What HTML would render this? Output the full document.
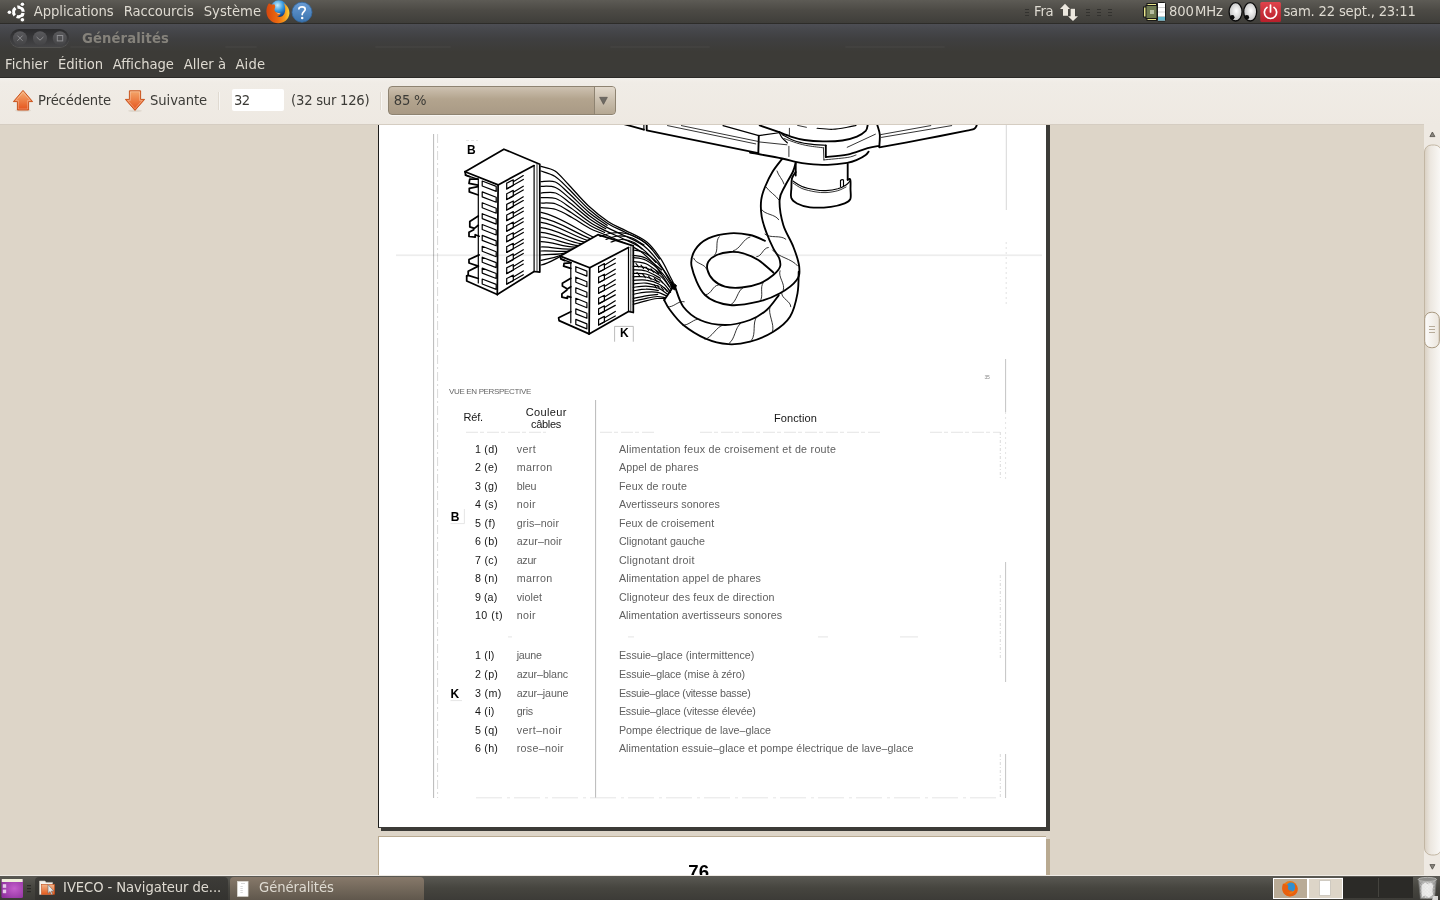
<!DOCTYPE html>
<html lang="fr">
<head>
<meta charset="utf-8">
<title>Généralités</title>
<style>
*{box-sizing:border-box;margin:0;padding:0}
html,body{width:1440px;height:900px;overflow:hidden;background:#efebe5}
body{position:relative;font-family:"DejaVu Sans","Liberation Sans",sans-serif;font-size:13px;color:#3c3b37}
.abs{position:absolute}
svg{position:absolute;overflow:visible}
.t{position:absolute;white-space:nowrap;line-height:1}
#toppanel{left:0;top:0;width:1440px;height:24px;background:linear-gradient(#5d5b55 0,#4c4a45 45%,#3f3e3a 100%);border-bottom:1px solid #2d2c29}
#toppanel .t{color:#dfdbd2;font-size:13.2px;top:5px}
#titlebar{left:0;top:24px;width:1440px;height:28px;background:linear-gradient(#4d4e54 0,#45464a 25%,#3f3f40 55%,#3c3b37 100%)}
#titlebar .t{color:#85827b;font-weight:bold;font-size:13.2px;top:8px;left:82px}
#menubar{left:0;top:52px;width:1440px;height:26px;background:#3c3b37;border-bottom:1px solid #2b2a27}
#menubar .t{color:#dfdbd2;font-size:13.2px;top:6px}
#toolbar{left:0;top:78px;width:1440px;height:47px;background:linear-gradient(#f3f0eb 0,#f0ece6 10%,#eee9e2 100%)}
#toolbar .t{color:#3c3b37;font-size:13.2px;top:16px}
#content{left:0;top:125px;width:1424px;height:750px;background:#ddd5c8;overflow:hidden}
#scroll{left:1424px;top:125px;width:16px;height:750px;background:#eee9e2}
#bottompanel{left:0;top:876px;width:1440px;height:24px;background:linear-gradient(#5a5953 0,#46453f 50%,#3c3b37 100%)}
#bottompanel .t{color:#dfdbd2;font-size:13.2px;top:5px}
#page{left:378px;top:-10px;width:668px;height:713px;background:#fff;border-left:1px solid #1c1c1a;border-bottom:1px solid #3c3b37}
#page2{left:378px;top:711px;width:668px;height:60px;background:#fff;border-left:1px solid #b9aa91;border-top:1px solid #b9aa91}
.doc{font-family:"Liberation Sans",sans-serif}
.d{position:absolute;white-space:nowrap;line-height:1;font-family:"Liberation Sans",sans-serif}

</style>
</head>
<body>
<div id="toppanel" class="abs">
  <svg style="left:0;top:0" width="36" height="24" viewBox="0 0 36 24">
    <g fill="none" stroke="#fff" stroke-width="3.2">
      <circle cx="18.3" cy="12" r="4.9" stroke-dasharray="8.26 2.0" stroke-dashoffset="-1.0"/>
    </g>
    <g fill="#4c4a45"><circle cx="9.4" cy="12.2" r="2.9"/><circle cx="22.6" cy="4.3" r="2.9"/><circle cx="22.6" cy="19.7" r="2.9"/></g>
    <g fill="#fff"><circle cx="9.4" cy="12.2" r="1.8"/><circle cx="22.4" cy="4.3" r="1.8"/><circle cx="22.4" cy="19.7" r="1.8"/></g>
  </svg>
  <span class="t" style="left:33.7px;letter-spacing:-0.05px">Applications</span>
  <span class="t" style="left:123.7px;letter-spacing:-0.08px">Raccourcis</span>
  <span class="t" style="left:203.7px;letter-spacing:0.01px">Système</span>
  <!-- firefox -->
  <svg style="left:266px;top:0" width="24" height="24" viewBox="0 0 24 24">
    <defs>
      <radialGradient id="ffg" cx="0.42" cy="0.3" r="0.75"><stop offset="0" stop-color="#c9eefa"/><stop offset="0.45" stop-color="#3a9be0"/><stop offset="0.85" stop-color="#0f4a98"/><stop offset="1" stop-color="#0a2d66"/></radialGradient>
      <linearGradient id="ffo" x1="0" y1="0" x2="1" y2="0"><stop offset="0" stop-color="#d4460f"/><stop offset="0.5" stop-color="#ec6a10"/><stop offset="0.8" stop-color="#f59a1c"/><stop offset="1" stop-color="#fdd43c"/></linearGradient>
    </defs>
    <circle cx="12.9" cy="8.6" r="8.4" fill="url(#ffg)"/>
    <path d="M3 3.2 C4.4 4.6 6 4.8 8.2 4.2 C9.4 5.4 9.6 6.8 8.8 8.2 C8 9.8 8.6 11.6 10.6 12.4 C12 13 13.4 13 14.6 13.4 C14 15.2 12.4 16.2 10.6 15.8 C12.6 17.8 16.6 17.4 18.4 13.4 C19.8 10.2 19.4 6.4 17.6 3 C21.2 5.2 23.8 9.4 23.4 13.8 C22.8 19.6 17.8 23.3 12.3 23.3 C6 23.3 0.7 18.6 0.4 11.8 C0.3 8.2 1.3 5.2 3 3.2 Z" fill="url(#ffo)"/>
    <path d="M9.6 12 C11 13.2 13 13 14.6 13.4 C13.4 14 11.2 14 9.6 12 Z" fill="#f4e3d2"/>
  </svg>
  <!-- help -->
  <svg style="left:291px;top:1px" width="22" height="22" viewBox="0 0 22 22">
    <defs><linearGradient id="hg" x1="0" y1="0" x2="0" y2="1"><stop offset="0" stop-color="#6a9cd4"/><stop offset="1" stop-color="#3a73ad"/></linearGradient></defs>
    <circle cx="11" cy="11.2" r="10" fill="url(#hg)" stroke="#3369a3" stroke-width="0.8"/>
    <path d="M7.9 7.9 C8.1 5.2 14.2 5 14.2 8.2 C14.2 10.4 11.2 10.8 11.2 13.6" fill="none" stroke="#fff" stroke-width="1.7" stroke-linecap="round"/>
    <circle cx="11.2" cy="17" r="1.25" fill="#fff"/>
  </svg>
  <!-- handles -->
  <svg style="left:1025px;top:0" width="90" height="24" viewBox="0 0 90 24">
    <g fill="#33322f">
      <rect x="0" y="9" width="4" height="1"/><rect x="0" y="12" width="4" height="1"/><rect x="0" y="15" width="4" height="1"/>
      <rect x="61" y="9" width="4" height="1"/><rect x="61" y="12" width="4" height="1"/><rect x="61" y="15" width="4" height="1"/>
      <rect x="72" y="9" width="4" height="1"/><rect x="72" y="12" width="4" height="1"/><rect x="72" y="15" width="4" height="1"/>
      <rect x="83" y="9" width="4" height="1"/><rect x="83" y="12" width="4" height="1"/><rect x="83" y="15" width="4" height="1"/>
    </g>
    <g fill="#ece8df">
      <path d="M40 3.7 L45 9 L43 9 L43 15.8 L38 15.8 L38 9 L35 9 Z"/>
      <path d="M45.6 8.8 L50 8.8 L50 16.2 L53 16.2 L48 21 L43 16.2 L45.6 16.2 Z" stroke="#3f3e3a" stroke-width="0.9" paint-order="stroke"/>
    </g>
  </svg>
  <span class="t" style="left:1034.0px;letter-spacing:-0.25px">Fra</span>
  <!-- cpu freq -->
  <svg style="left:1143px;top:0" width="24" height="24" viewBox="0 0 24 24">
    <rect x="0.5" y="7" width="3" height="10" fill="#e8e48a" stroke="#1a1a18" stroke-width="1"/>
    <rect x="4" y="3.5" width="9.5" height="3" fill="#e8e48a" stroke="#1a1a18" stroke-width="1"/>
    <rect x="4" y="17.5" width="9.5" height="3" fill="#e8e48a" stroke="#1a1a18" stroke-width="1"/>
    <rect x="3" y="5.5" width="11" height="13" fill="#6f7a52" stroke="#1a1a18" stroke-width="1"/>
    <rect x="7" y="10" width="4" height="4" fill="#b5bda0"/>
    <rect x="14.5" y="2.5" width="8" height="18.5" rx="0.8" fill="#fff" stroke="#1a1a18" stroke-width="1"/>
    <rect x="15" y="16.5" width="7" height="4" fill="#63b6cb"/>
    <g fill="#c9c9c9"><rect x="15" y="7" width="7" height="0.8"/><rect x="15" y="11.6" width="7" height="0.8"/><rect x="15" y="16" width="7" height="0.8"/></g>
  </svg>
  <span class="t" style="left:1169.1px;letter-spacing:-0.2px;word-spacing:-2.6px">800 MHz</span>
  <!-- eyes -->
  <svg style="left:1228px;top:0" width="30" height="24" viewBox="0 0 30 24">
    <defs><radialGradient id="eg" cx="0.55" cy="0.45" r="0.6"><stop offset="0" stop-color="#fff"/><stop offset="1" stop-color="#b9b9b9"/></radialGradient></defs>
    <ellipse cx="7.6" cy="11.8" rx="6.5" ry="9.2" fill="url(#eg)" stroke="#0c0c0c" stroke-width="1.3"/>
    <ellipse cx="22.2" cy="11.8" rx="6.5" ry="9.2" fill="url(#eg)" stroke="#0c0c0c" stroke-width="1.3"/>
    <circle cx="4.2" cy="17.2" r="2.3" fill="#0c0c0c"/><circle cx="18.8" cy="17.2" r="2.3" fill="#0c0c0c"/>
  </svg>
  <!-- power -->
  <svg style="left:1260px;top:2px" width="21" height="20" viewBox="0 0 21 20">
    <defs><linearGradient id="pg" x1="0" y1="0" x2="0" y2="1"><stop offset="0" stop-color="#e0444c"/><stop offset="1" stop-color="#b81f2b"/></linearGradient></defs>
    <rect x="0.3" y="0" width="20.6" height="20" rx="1.5" fill="url(#pg)"/>
    <path d="M7 5.4 A6.1 6.1 0 1 0 14 5.4" fill="none" stroke="#fff" stroke-width="1.7" stroke-linecap="round"/>
    <path d="M10.5 3 L10.5 10" stroke="#fff" stroke-width="1.7" stroke-linecap="round"/>
  </svg>
  <span class="t" style="left:1283.4px;letter-spacing:-0.2px">sam. 22 sept., 23:11</span>
</div>
<div id="titlebar" class="abs">
  <div class="abs tstrip" style="left:70px;top:22px;width:30px;height:2px;background:rgba(255,255,255,0.028);border-radius:1px"></div><div class="abs tstrip" style="left:225px;top:22px;width:32px;height:2px;background:rgba(255,255,255,0.028);border-radius:1px"></div><div class="abs tstrip" style="left:375px;top:22px;width:76px;height:2px;background:rgba(255,255,255,0.028);border-radius:1px"></div><div class="abs tstrip" style="left:610px;top:22px;width:100px;height:2px;background:rgba(255,255,255,0.028);border-radius:1px"></div><div class="abs tstrip" style="left:845px;top:22px;width:100px;height:2px;background:rgba(255,255,255,0.028);border-radius:1px"></div>
  <div class="abs" style="left:10px;top:5px;width:59px;height:18px;border-radius:9px;background:linear-gradient(#2b2b2d,#454547);box-shadow:0 1px 0 rgba(255,255,255,0.12)"></div>
  <svg style="left:10px;top:5px" width="59" height="18" viewBox="0 0 59 18">
    <defs><linearGradient id="wb" x1="0" y1="0" x2="0" y2="1"><stop offset="0" stop-color="#5a5a5d"/><stop offset="1" stop-color="#444446"/></linearGradient></defs>
    <circle cx="10" cy="9.2" r="7" fill="url(#wb)"/><circle cx="30" cy="9.2" r="7" fill="url(#wb)"/><circle cx="49.8" cy="9.2" r="7" fill="url(#wb)"/>
    <g stroke="#8d8d90" stroke-width="1" fill="none">
      <path d="M7.4 6.6 L12.6 11.8 M12.6 6.6 L7.4 11.8"/>
      <path d="M26.6 8 L30 11.2 L33.4 8"/>
      <rect x="47.3" y="6.5" width="5.4" height="5.4"/>
    </g>
  </svg>
  <span class="t" style="letter-spacing:0.12px">Généralités</span>
</div>
<div id="menubar" class="abs">
  <span class="t" style="left:5.1px;letter-spacing:-0.02px">Fichier</span>
  <span class="t" style="left:58.1px;letter-spacing:-0.09px">Édition</span>
  <span class="t" style="left:112.7px;letter-spacing:-0.06px">Affichage</span>
  <span class="t" style="left:183.7px;letter-spacing:0.03px">Aller à</span>
  <span class="t" style="left:235.4px;letter-spacing:0.21px">Aide</span>
</div>
<div id="toolbar" class="abs">
  <div id="tbline" class="abs" style="left:0;top:46px;width:1424px;height:1px;background:#d5cdc2"></div>
  <svg style="left:12px;top:11px" width="24" height="24" viewBox="0 0 24 24">
    <defs><linearGradient id="ag" x1="0" y1="0" x2="0" y2="1"><stop offset="0" stop-color="#f6b176"/><stop offset="1" stop-color="#e5521a"/></linearGradient></defs>
    <ellipse cx="11" cy="21.6" rx="8" ry="1.4" fill="#d8d0c4" opacity="0.7"/>
    <path d="M11 1.4 L20.6 12.6 L16.6 12.6 L16.6 21 L5.4 21 L5.4 12.6 L1.4 12.6 Z" fill="url(#ag)" stroke="#c9531c" stroke-width="1" stroke-linejoin="round"/><path d="M11 3.2 L18.2 11.6 L15.6 11.6 L15.6 20 L6.4 20 L6.4 11.6 L3.8 11.6 Z" fill="none" stroke="#fff" stroke-opacity="0.3" stroke-width="0.9"/>
  </svg>
  <svg style="left:124px;top:11px" width="24" height="24" viewBox="0 0 24 24">
    <defs><linearGradient id="ag2" x1="0" y1="0" x2="0" y2="1"><stop offset="0" stop-color="#f4a76c"/><stop offset="1" stop-color="#e5521a"/></linearGradient></defs>
    <ellipse cx="11" cy="21.8" rx="7" ry="1.3" fill="#d8d0c4" opacity="0.7"/>
    <path d="M5.4 1.8 L16.6 1.8 L16.6 10.4 L20.6 10.4 L11 21.4 L1.4 10.4 L5.4 10.4 Z" fill="url(#ag2)" stroke="#c9531c" stroke-width="1" stroke-linejoin="round"/><path d="M6.4 2.8 L15.6 2.8 L15.6 11.4 L18.2 11.4 L11 19.8 L3.8 11.4 L6.4 11.4 Z" fill="none" stroke="#fff" stroke-opacity="0.3" stroke-width="0.9"/>
  </svg>
  <span class="t" style="left:38.1px;letter-spacing:-0.15px">Précédente</span>
  <span class="t" style="left:150.1px;letter-spacing:-0.12px">Suivante</span>
  <div class="abs" style="left:218px;top:14px;width:1px;height:18px;background:#e0dad1"></div>
  <div class="abs" style="left:219px;top:14px;width:1px;height:18px;background:#f8f6f3"></div>
  <div class="abs" style="left:232px;top:11px;width:52px;height:22px;background:#fff;border-radius:2px"></div>
  <span class="t" style="left:233.9px;letter-spacing:-0.49px">32</span>
  <span class="t" style="left:291.1px;letter-spacing:-0.25px">(32 sur 126)</span>
  <div class="abs" style="left:380px;top:14px;width:1px;height:18px;background:#e0dad1"></div>
  <div class="abs" style="left:381px;top:14px;width:1px;height:18px;background:#f8f6f3"></div>
  <div class="abs" style="left:388px;top:8px;width:228px;height:29px;border:1px solid #8e8371;border-radius:4px;background:linear-gradient(#cdc1b0 0,#b3a48e 45%,#a99a85 100%);box-shadow:0 1px 0 #f8f6f3"></div>
  <div class="abs" style="left:594px;top:9px;width:21px;height:27px;border-left:1px solid #8e8371;border-radius:0 3px 3px 0;background:linear-gradient(#e2d9cc 0,#c9bead 50%,#b5a893 100%)"></div>
  <svg style="left:599px;top:19px" width="9" height="8" viewBox="0 0 9 8"><path d="M0.6 0.3 L8.4 0.3 L4.5 7.4 Z" fill="#6e6a63" stroke="#55514b" stroke-width="0.6"/></svg>
  <span class="t" style="left:393.7px;letter-spacing:-0.2px">85 %</span>
</div>

<div id="content" class="abs">
  <div id="page" class="abs"></div>
  <div class="abs" style="left:381px;top:703px;width:669px;height:3px;background:#3c3b37"></div>
  <div class="abs" style="left:1046px;top:0;width:4px;height:706px;background:#3c3b37"></div>
  <div id="page2" class="abs"></div>
  <div class="abs" style="left:1046px;top:714px;width:4px;height:40px;background:#b9aa91"></div>
<svg style="left:0;top:0" width="1424" height="750" viewBox="0 125 1424 750" fill="none">
<g stroke="#b0b0b0" stroke-width="0.9">
<path d="M433.6,134 V798"/>
<path d="M595.6,400 V798"/>
</g>
<g stroke="#dedede" stroke-width="0.8">
<path d="M437.6,134 V798" stroke-dasharray="9 3 2 3" stroke="#cfcfcf"/>
<path d="M1000.3,432 V480 M1000.3,575 V660 M1000.3,754 V798" stroke-dasharray="3 2 1 2" stroke="#cfcfcf"/>
<path d="M1006.3,125 V210" stroke="#cdcdcd"/><path d="M1006.2,242 V305 M1005.6,412 V480" stroke="#dcdcdc" stroke-dasharray="2 3"/><path d="M1005.6,359 V412 M1005.6,562 V682 M1005.6,754 V798" stroke="#b4b4b4"/>
<path d="M466,432.3 H546 M600,432.3 H656 M700,432.3 H880 M930,432.3 H1000" stroke-dasharray="12 2 4 3"/>
<path d="M476,797.8 H1000" stroke-dasharray="26 5 3 4"/>
<path d="M508,636.9 H512 M628,636.9 H634 M818,636.9 H828 M900,636.9 H918" />
<path d="M450.5,523.6 H464.4 V509" /><path d="M450.5,700.6 H462" />
<path d="M614.6,326.4 H633.3 V341.7 M614.6,326.4 V341.7" stroke="#aaa"/>
<path d="M466,140.5 H478" stroke-dasharray="3 2"/>
</g></svg>
<svg style="left:0;top:0" width="1424" height="750" viewBox="0 125 1424 750" fill="none" stroke-linecap="round" stroke-linejoin="round">
<g stroke="#000" stroke-width="1.25"><path d="M541.0,166.3 C543.3,167.1 550.5,168.0 555.0,171.0 C559.5,174.0 562.8,178.5 568.3,184.3 C573.8,190.1 581.6,199.5 588.3,205.7 C595.0,211.9 602.1,217.5 608.3,221.7 C614.5,225.8 619.3,227.2 625.7,230.6 C632.1,233.9 640.7,237.2 646.5,241.8 C652.3,246.4 656.4,252.5 660.3,258.2 C664.2,263.8 667.6,271.6 669.7,275.7 C671.9,279.8 672.6,281.5 673.2,282.7"/><path d="M541.0,171.0 C543.4,171.9 550.5,173.5 555.1,176.5 C559.8,179.5 563.3,183.6 568.8,189.0 C574.4,194.5 582.1,203.2 588.5,209.0 C595.0,214.7 601.6,219.6 607.7,223.5 C613.8,227.4 618.9,229.0 625.2,232.2 C631.5,235.5 639.9,238.6 645.6,243.1 C651.3,247.6 657.1,256.4 659.4,259.0"/><path d="M541.0,181.7 C543.4,181.8 550.6,180.0 555.3,182.0 C560.0,184.0 563.8,188.8 569.4,193.8 C574.9,198.8 582.5,207.0 588.8,212.2 C595.1,217.5 604.0,223.1 607.1,225.3"/><path d="M541.0,186.3 C543.4,186.5 550.6,185.5 555.4,187.5 C560.2,189.5 564.3,193.9 569.9,198.5 C575.5,203.2 582.9,210.7 589.0,215.5 C595.1,220.2 600.6,223.7 606.5,227.1 C612.3,230.4 617.9,232.4 624.1,235.5 C630.3,238.6 638.1,241.5 643.7,245.7 C649.3,249.9 653.7,255.5 657.6,260.7 C661.5,265.8 665.0,272.8 667.3,276.7 C669.6,280.6 670.7,282.9 671.4,284.1"/><path d="M541.0,193.0 C543.4,193.0 550.7,191.3 555.6,193.0 C560.5,194.7 564.8,199.0 570.4,203.3 C576.0,207.6 583.4,214.5 589.3,218.7 C595.2,223.0 603.1,227.2 605.8,228.8"/><path d="M541.0,197.7 C543.5,197.8 550.7,196.8 555.7,198.5 C560.7,200.2 565.3,204.1 570.9,208.0 C576.6,211.9 583.8,218.2 589.5,222.0 C595.2,225.8 599.6,227.8 605.2,230.6 C610.8,233.4 617.0,235.8 623.1,238.7 C629.2,241.7 636.4,244.4 641.9,248.4 C647.3,252.3 653.5,260.0 655.8,262.3"/><path d="M541.0,203.0 C543.5,203.2 550.8,202.4 555.9,204.0 C560.9,205.6 565.8,209.2 571.5,212.8 C577.1,216.3 584.2,222.0 589.8,225.2 C595.3,228.5 602.1,231.2 604.6,232.4"/><path d="M541.0,207.7 C543.5,208.0 550.8,207.9 556.0,209.5 C561.2,211.1 566.3,214.3 572.0,217.5 C577.7,220.7 584.7,225.7 590.0,228.5 C595.3,231.3 598.7,231.9 604.0,234.2 C609.3,236.4 616.0,239.2 622.0,242.0 C628.0,244.8 634.7,247.3 640.0,251.0 C645.3,254.7 650.0,259.5 654.0,264.0 C658.0,268.5 661.5,274.3 664.0,278.0 C666.5,281.7 668.2,284.7 669.0,286.0"/><path d="M541,212.3 C558.5,215.6 576.0,228.8 593.5,237.2"/><path d="M541,217.7 C557.5,220.3 574.1,232.4 590.6,238.9"/><path d="M541,222.3 C556.6,224.2 572.2,235.8 587.8,240.5"/><path d="M541,227.7 C555.6,229.0 570.3,239.1 584.9,242.2"/><path d="M541,232.3 C554.7,233.1 568.4,242.2 582.0,243.9"/><path d="M541,237.0 C553.7,237.3 566.5,245.1 579.2,245.6"/><path d="M541,241.7 C552.8,241.6 564.5,247.9 576.3,247.2"/><path d="M541,247.0 C551.8,246.5 562.6,250.5 573.5,248.9"/><path d="M541,251.0 C550.9,250.2 560.7,252.9 570.6,250.6"/><path d="M541,255.0 C549.9,254.0 558.8,255.1 567.7,252.3"/><path d="M541,260.3 C549.0,259.1 556.9,257.2 564.9,253.9"/><path d="M541,265.0 C548.0,263.7 555.0,259.1 562.0,255.6"/></g>
<polygon points="465.1,171.7 503.9,149.2 539.8,164.3 539.8,272.1 534.1,271.5 497.3,294.5 466.7,281.0 466.7,275.9 478.3,268.9 478.3,179.4 465.6,175.1" fill="#fff" stroke="none"/>
<g stroke="#000" stroke-width="1.2"><path d="M534.1,165.6 L534.1,271.1"/><path d="M465.6,175.1 L478.3,179.4"/><path d="M478.3,179.0 L478.3,282.9"/><path d="M482.2,181.0 L496.2,186.4 L496.2,191.4 L482.2,186.0 L482.2,181.0"/><path d="M482.2,191.9 L496.2,197.3 L496.2,202.3 L482.2,196.9 L482.2,191.9"/><path d="M482.2,202.8 L496.2,208.2 L496.2,213.2 L482.2,207.7 L482.2,202.8"/><path d="M482.2,213.7 L496.2,219.1 L496.2,224.1 L482.2,218.6 L482.2,213.7"/><path d="M482.2,224.5 L496.2,230.0 L496.2,235.0 L482.2,229.5 L482.2,224.5"/><path d="M482.2,235.4 L496.2,240.9 L496.2,245.8 L482.2,240.4 L482.2,235.4"/><path d="M482.2,246.3 L496.2,251.8 L496.2,256.7 L482.2,251.3 L482.2,246.3"/><path d="M482.2,257.2 L496.2,262.6 L496.2,267.6 L482.2,262.2 L482.2,257.2"/><path d="M482.2,268.1 L496.2,273.5 L496.2,278.5 L482.2,273.1 L482.2,268.1"/><path d="M482.2,279.0 L496.2,284.4 L496.2,289.4 L482.2,284.0 L482.2,279.0"/><path d="M506.7,183.2 L513.3,179.8 L513.3,185.5 L506.7,188.9 L506.7,183.2"/><path d="M513.3,181.7 L523.3,175.6"/><path d="M506.7,188.9 L523.3,179.4"/><path d="M506.7,193.8 L513.3,190.4 L513.3,196.1 L506.7,199.5 L506.7,193.8"/><path d="M513.3,192.3 L523.3,186.2"/><path d="M506.7,199.5 L523.3,190.0"/><path d="M506.7,204.4 L513.3,201.0 L513.3,206.6 L506.7,210.0 L506.7,204.4"/><path d="M513.3,202.9 L523.3,196.8"/><path d="M506.7,210.0 L523.3,200.6"/><path d="M506.7,215.0 L513.3,211.6 L513.3,217.2 L506.7,220.6 L506.7,215.0"/><path d="M513.3,213.4 L523.3,207.4"/><path d="M506.7,220.6 L523.3,211.2"/><path d="M506.7,225.5 L513.3,222.1 L513.3,227.8 L506.7,231.2 L506.7,225.5"/><path d="M513.3,224.0 L523.3,218.0"/><path d="M506.7,231.2 L523.3,221.8"/><path d="M506.7,236.1 L513.3,232.7 L513.3,238.4 L506.7,241.8 L506.7,236.1"/><path d="M513.3,234.6 L523.3,228.6"/><path d="M506.7,241.8 L523.3,232.4"/><path d="M506.7,246.7 L513.3,243.3 L513.3,249.0 L506.7,252.4 L506.7,246.7"/><path d="M513.3,245.2 L523.3,239.2"/><path d="M506.7,252.4 L523.3,242.9"/><path d="M506.7,257.3 L513.3,253.9 L513.3,259.6 L506.7,263.0 L506.7,257.3"/><path d="M513.3,255.8 L523.3,249.7"/><path d="M506.7,263.0 L523.3,253.5"/><path d="M506.7,267.9 L513.3,264.5 L513.3,270.2 L506.7,273.6 L506.7,267.9"/><path d="M513.3,266.4 L523.3,260.3"/><path d="M506.7,273.6 L523.3,264.1"/><path d="M506.7,278.5 L513.3,275.1 L513.3,280.7 L506.7,284.1 L506.7,278.5"/><path d="M513.3,277.0 L523.3,270.9"/><path d="M506.7,284.1 L523.3,274.7"/></g>
<g stroke="#000" stroke-width="1.75"><path d="M465.1,171.7 L503.9,149.2 L539.8,164.3 L539.8,272.1 L534.1,271.5 L497.3,294.5"/><path d="M465.1,171.7 L498.1,184.9 L534.1,165.6"/><path d="M498.1,184.9 L497.3,294.5"/><path d="M465.1,171.7 L465.6,175.1"/><path d="M465.6,175.1 L469.8,176.8"/><path d="M478.0,179.0 L469.8,179.0 L469.0,183.3 L478.0,185.2"/><path d="M478.0,186.7 L469.3,188.3 L469.3,191.9 L478.3,195.0"/><path d="M478.3,216.0 L469.8,221.4 L469.8,226.9 L474.4,228.4 L478.3,225.3"/><path d="M473.7,229.7 L469.0,232.3 L469.0,236.5 L475.2,237.1 L475.2,234.7 L479.1,236.2"/><path d="M479.1,254.9 L469.0,259.5 L469.0,263.0 L478.3,266.1"/><path d="M478.3,266.1 L468.2,271.2 L468.2,275.4 L478.3,278.5"/><path d="M466.7,275.9 L466.7,281.0 L497.3,294.5"/><path d="M468.2,275.4 L466.7,275.9"/></g>
<polygon points="560.2,256.1 597.9,234.7 633.3,245.8 633.3,312.5 628.5,311.4 589.1,333.9 559.1,320.6 558.6,317.8 570.8,311.7 570.8,262.8 560.8,258.9" fill="#fff" stroke="none"/>
<g stroke="#000" stroke-width="1.2"><path d="M628.5,247.5 L628.5,311.4"/><path d="M560.8,258.9 L571.3,262.6"/><path d="M570.8,262.6 L570.8,322.8"/><path d="M575.8,266.7 L586.9,271.1 L586.9,276.1 L575.8,271.7 L575.8,266.7"/><path d="M575.8,277.2 L586.9,281.7 L586.9,286.7 L575.8,282.2 L575.8,277.2"/><path d="M575.8,287.8 L586.9,292.2 L586.9,297.2 L575.8,292.8 L575.8,287.8"/><path d="M575.8,298.3 L586.9,302.8 L586.9,307.8 L575.8,303.3 L575.8,298.3"/><path d="M575.8,308.9 L586.9,313.3 L586.9,318.3 L575.8,313.9 L575.8,308.9"/><path d="M575.8,319.4 L586.9,323.9 L586.9,328.9 L575.8,324.4 L575.8,319.4"/><path d="M598.6,266.7 L604.4,263.6 L604.4,269.2 L598.6,272.2 L598.6,266.7"/><path d="M604.4,265.3 L615.3,258.6"/><path d="M598.6,272.2 L615.3,263.2"/><path d="M598.6,277.2 L604.4,274.2 L604.4,279.7 L598.6,282.8 L598.6,277.2"/><path d="M604.4,275.8 L615.3,269.2"/><path d="M598.6,282.8 L615.3,273.8"/><path d="M598.6,287.8 L604.4,284.7 L604.4,290.3 L598.6,293.3 L598.6,287.8"/><path d="M604.4,286.4 L615.3,279.7"/><path d="M598.6,293.3 L615.3,284.3"/><path d="M598.6,298.3 L604.4,295.3 L604.4,300.8 L598.6,303.9 L598.6,298.3"/><path d="M604.4,296.9 L615.3,290.3"/><path d="M598.6,303.9 L615.3,294.9"/><path d="M598.6,308.9 L604.4,305.8 L604.4,311.4 L598.6,314.4 L598.6,308.9"/><path d="M604.4,307.5 L615.3,300.8"/><path d="M598.6,314.4 L615.3,305.4"/><path d="M598.6,319.4 L604.4,316.4 L604.4,321.9 L598.6,325.0 L598.6,319.4"/><path d="M604.4,318.1 L615.3,311.4"/><path d="M598.6,325.0 L615.3,316.0"/></g>
<g stroke="#000" stroke-width="1.75"><path d="M560.2,256.1 L597.9,234.7 L633.3,245.8 L633.3,312.5 L628.5,311.4 L589.1,333.9"/><path d="M560.2,256.1 L589.7,267.8 L628.5,247.5"/><path d="M589.7,267.8 L589.1,333.9"/><path d="M560.2,256.1 L560.8,258.9 L564.7,260.6"/><path d="M570.8,262.8 L564.1,263.3 L563.6,266.1 L570.8,268.3"/><path d="M570.8,278.3 L562.4,283.3 L562.4,286.1 L567.4,288.9 L570.8,286.7"/><path d="M566.9,290.0 L561.9,293.9 L561.9,297.2 L567.4,298.3 L567.4,296.3 L570.8,297.2"/><path d="M570.8,311.7 L558.6,317.8 L559.1,320.6 L589.1,333.9"/></g>
<g stroke="#000" stroke-width="1.2"><path d="M633.3,250.0 C635.4,250.6 641.2,250.5 646.0,253.5 C650.8,256.5 657.4,262.7 662.0,268.0 C666.6,273.3 671.6,282.6 673.5,285.5"/><path d="M633.3,255.3 C635.4,255.8 641.3,255.9 646.0,258.3 C650.7,260.8 659.1,268.1 661.7,270.0"/><path d="M633.3,257.6 C635.4,258.0 641.3,257.8 646.0,260.2 C650.7,262.6 657.0,267.6 661.3,272.1 C665.7,276.6 670.5,284.7 672.3,287.2"/><path d="M633.3,261.7 C635.4,262.1 641.4,261.7 646.0,263.8 C650.6,265.9 658.5,272.4 661.0,274.1"/><path d="M633.3,266.3 C635.4,266.6 641.4,266.3 646.0,267.9 C650.6,269.6 656.5,272.6 660.7,276.1 C664.8,279.6 669.4,286.8 671.1,289.0"/><path d="M633.3,269.8 C635.4,270.0 641.5,269.6 646.0,271.0 C650.5,272.4 657.9,277.0 660.3,278.2"/><path d="M633.3,273.3 C635.4,273.4 641.5,272.9 646.0,274.0 C650.5,275.1 656.0,277.4 660.0,280.2 C664.0,283.0 668.2,288.9 669.9,290.7"/><path d="M633.3,276.8 C635.4,276.8 641.6,276.1 646.0,277.0 C650.4,277.9 657.4,281.4 659.7,282.2"/><path d="M633.3,280.3 C635.4,280.3 641.7,279.4 646.0,280.1 C650.3,280.7 655.6,282.2 659.3,284.3 C663.1,286.3 667.1,291.1 668.7,292.4"/><path d="M633.3,283.8 C635.4,283.7 641.7,282.7 646.0,283.1 C650.3,283.5 656.8,285.8 659.0,286.3"/><path d="M633.3,287.3 C635.4,287.1 641.8,286.0 646.0,286.1 C650.2,286.3 655.1,287.0 658.7,288.3 C662.2,289.7 666.0,293.2 667.5,294.2"/><path d="M633.3,290.8 C635.4,290.5 641.8,289.2 646.0,289.2 C650.2,289.1 656.3,290.2 658.3,290.4"/><path d="M633.3,294.3 C635.4,293.9 641.9,292.5 646.0,292.2 C650.1,291.9 654.6,291.8 658.0,292.4 C661.4,293.0 664.9,295.3 666.3,295.9"/><path d="M633.3,298.4 C635.4,298.0 641.9,296.5 646.0,295.8 C650.1,295.2 655.7,294.7 657.7,294.4"/><path d="M633.3,301.3 C635.4,300.8 642.0,299.1 646.0,298.3 C650.0,297.5 654.2,296.6 657.3,296.5 C660.5,296.4 663.8,297.4 665.1,297.6"/><path d="M633.3,304.3 C635.4,303.7 642.0,301.8 646.0,300.8 C650.0,299.8 653.9,298.9 657.0,298.5 C660.1,298.1 663.2,298.5 664.5,298.5"/><path d="M600.0,236.5 C602.0,235.9 607.7,233.5 612.0,233.0 C616.3,232.5 621.3,232.5 626.0,233.5 C630.7,234.5 635.7,236.4 640.0,239.0 C644.3,241.6 650.0,247.3 652.0,249.0"/><path d="M606.0,239.5 C608.0,238.9 613.7,236.2 618.0,236.0 C622.3,235.8 627.7,236.5 632.0,238.0 C636.3,239.5 642.0,243.8 644.0,245.0"/><path d="M611.0,242.0 C612.8,241.6 618.2,239.4 622.0,239.5 C625.8,239.6 630.7,240.9 634.0,242.5 C637.3,244.1 640.7,247.9 642.0,249.0"/></g>
<g stroke="#000" stroke-width="1.1"><path d="M636.0,263.5 l2.6,3.4"/><path d="M641.0,265.2 l2.6,3.4"/><path d="M646.0,267.0 l2.6,3.4"/><path d="M651.0,268.8 l2.6,3.4"/><path d="M656.0,270.5 l2.6,3.4"/><path d="M637.0,272.5 l2.6,3.4"/><path d="M642.8,274.2 l2.6,3.4"/><path d="M648.5,276.0 l2.6,3.4"/><path d="M654.2,277.8 l2.6,3.4"/><path d="M660.0,279.5 l2.6,3.4"/><path d="M654.0,284.5 l2.6,3.4"/><path d="M657.5,285.6 l2.6,3.4"/><path d="M661.0,286.8 l2.6,3.4"/><path d="M664.5,287.9 l2.6,3.4"/><path d="M668.0,289.0 l2.6,3.4"/></g>
<g stroke="#000" stroke-width="1.85"><path d="M620.0,123.0 L643.9,129.7"/><path d="M646.7,125.0 L646.7,130.4 L758.3,153.1"/><path d="M750.0,152.6 C755.4,153.6 774.5,156.9 782.1,158.5 C789.7,160.1 791.3,161.0 795.7,161.9 C800.1,162.8 802.9,163.3 808.3,163.8 C813.6,164.3 821.3,165.0 827.8,164.8 C834.3,164.6 842.4,163.6 847.2,162.8 C852.1,162.0 853.8,161.2 856.9,159.9 C860.0,158.6 863.8,156.4 865.7,155.0 C867.7,153.6 868.1,152.2 868.6,151.7"/><path d="M759.7,125.4 L779.2,132.2"/><path d="M779.2,132.2 C781.1,132.9 786.6,135.3 790.8,136.6 C795.0,137.9 799.0,139.2 804.4,140.0 C809.8,140.8 816.6,141.3 822.9,141.4 C829.2,141.5 836.7,141.3 842.4,140.5 C848.1,139.7 853.0,138.2 856.9,136.6 C860.8,135.0 863.9,132.6 865.7,130.8 C867.5,128.9 867.3,126.3 867.6,125.4"/><path d="M825.8,145.3 L825.8,157.0"/><path d="M825.8,157.0 C829.4,156.6 840.2,156.1 847.2,154.6 C854.2,153.1 862.2,149.7 867.6,148.2 C873.0,146.8 877.3,146.2 879.3,145.8"/><path d="M758.8,135.6 L758.3,153.1"/><path d="M877.4,125.4 C877.8,126.9 879.5,131.1 879.8,134.6 C880.1,138.1 879.4,144.4 879.3,146.3"/><path d="M879.3,147.4 C886.9,146.0 910.4,141.7 925.0,138.9 C939.6,136.1 958.8,132.3 967.0,130.6 C975.2,128.9 972.9,129.5 974.5,128.6 C976.1,127.7 976.3,125.9 976.7,125.4"/><path d="M795.7,162.8 L795.7,175.5"/><path d="M847.7,163.8 L847.7,179.7"/><path d="M795.7,172.0 C795.1,173.1 792.7,175.6 792.0,178.3 C791.3,181.0 791.5,184.8 791.4,188.0 C791.3,191.2 790.3,195.2 791.2,197.8 C792.1,200.4 793.9,201.9 797.0,203.5 C800.1,205.1 804.4,206.8 810.0,207.3 C815.6,207.9 825.0,207.5 830.8,206.8 C836.6,206.1 841.5,204.6 844.7,203.3 C848.0,202.0 849.3,201.6 850.3,199.2 C851.3,196.8 850.5,192.2 850.5,189.0 C850.5,185.8 850.8,181.2 850.3,179.7 C849.8,178.1 848.1,179.7 847.7,179.7"/><path d="M795.7,162.8 C795.2,164.3 794.6,168.1 792.8,172.0 C791.0,175.9 787.2,181.3 785.0,186.0 C782.8,190.7 779.9,193.5 779.6,200.0 C779.3,206.5 781.0,217.2 783.3,225.0 C785.6,232.8 790.7,239.7 793.3,246.7 C796.0,253.6 798.6,261.1 799.2,266.7 C799.7,272.2 799.9,275.6 796.7,280.0 C793.5,284.4 786.4,289.7 780.0,293.3 C773.6,296.9 766.7,299.7 758.3,301.7 C750.0,303.6 738.9,306.1 730.0,305.0 C721.1,303.9 711.4,301.4 705.0,295.0 C698.6,288.6 693.3,274.2 691.7,266.7 C690.0,259.2 692.2,254.7 695.0,250.0 C697.8,245.3 702.5,241.1 708.3,238.3 C714.2,235.6 723.1,233.9 730.0,233.3 C736.9,232.8 744.2,233.8 750.0,235.0 C755.8,236.2 762.5,239.9 765.0,240.8"/><path d="M782.1,158.9 C780.5,161.1 775.2,167.3 772.4,172.0 C769.5,176.7 766.9,182.3 765.0,187.0 C763.1,191.7 761.8,195.1 761.2,200.0 C760.6,204.9 760.8,211.1 761.7,216.7 C762.6,222.2 764.7,228.1 766.7,233.3 C768.6,238.6 771.2,244.2 773.3,248.3 C775.4,252.5 778.1,255.3 779.2,258.3 C780.3,261.4 781.0,263.9 780.0,266.7 C779.0,269.4 776.7,272.2 773.3,275.0 C770.0,277.8 765.3,281.2 760.0,283.3 C754.7,285.4 747.5,286.9 741.7,287.5 C735.8,288.1 729.7,287.9 725.0,286.7 C720.3,285.4 716.2,282.8 713.3,280.0 C710.4,277.2 708.3,273.1 707.5,270.0 C706.7,266.9 706.8,264.2 708.3,261.7 C709.9,259.2 713.1,256.6 716.7,255.0 C720.3,253.4 725.6,252.3 730.0,252.0 C734.4,251.7 738.6,252.0 743.3,253.3 C748.1,254.7 753.3,256.8 758.3,260.0 C763.3,263.2 770.8,270.4 773.3,272.5"/><path d="M798.7,271.7 C798.5,275.3 798.9,285.8 797.5,293.3 C796.1,300.8 794.0,310.3 790.0,316.7 C786.0,323.1 780.0,327.5 773.3,331.7 C766.7,335.8 757.5,339.6 750.0,341.7 C742.5,343.7 735.8,344.7 728.3,344.2 C720.8,343.6 712.5,341.5 705.0,338.3 C697.5,335.1 689.2,329.7 683.3,325.0 C677.5,320.3 673.2,314.2 670.0,310.0 C666.8,305.8 665.1,301.7 664.2,300.0"/><path d="M675.0,286.7 C676.4,290.0 679.2,301.1 683.3,306.7 C687.5,312.2 693.1,316.9 700.0,320.0 C706.9,323.1 716.7,325.0 725.0,325.0 C733.3,325.0 743.1,322.5 750.0,320.0 C756.9,317.5 761.9,314.1 766.7,310.0 C771.4,305.9 776.7,297.8 778.7,295.3"/><path d="M664.2,300.0 L673.3,286.7"/></g>
<g stroke="#000" stroke-width="1.15"><path d="M643.9,125.0 L643.9,129.7"/><path d="M723.0,125.6 L758.8,135.6"/><path d="M817.1,128.3 C819.7,128.5 827.6,129.5 832.6,129.3 C837.6,129.1 843.3,128.0 847.2,127.3 C851.1,126.6 854.5,125.7 856.0,125.4"/><path d="M779.2,132.2 C779.7,133.1 780.6,135.8 782.0,137.6 C783.4,139.4 786.5,142.0 787.4,142.9"/><path d="M782.0,134.6 C784.0,135.6 789.4,138.9 793.8,140.5 C798.1,142.1 803.0,143.1 808.3,143.9 C813.6,144.7 822.9,145.1 825.8,145.3"/><path d="M758.8,135.6 L779.2,132.7"/><path d="M793.0,181.0 C794.5,181.9 798.3,185.0 802.0,186.5 C805.7,188.0 811.0,189.1 815.0,189.8 C819.0,190.5 822.2,190.8 826.0,190.6 C829.8,190.4 834.5,189.7 837.8,188.8 C841.1,187.8 844.0,186.3 846.0,185.0 C848.0,183.7 849.3,181.7 850.0,181.0"/><path d="M840.5,180.5 L840.5,186.5 M843.5,180 L843.5,186 M840.5,180.5 Q842,179 843.5,180"/></g>
<g stroke="#111" stroke-width="0.85"><path d="M667.5,125.6 L755.7,143.9"/><path d="M681.4,125.6 L758.5,141.5"/><path d="M797.6,125.4 L806.4,127.3"/><path d="M784.0,138.5 C786.1,139.2 792.7,141.8 796.7,143.0 C800.8,144.2 803.8,145.0 808.3,145.8 C812.8,146.6 820.9,147.5 823.4,147.8"/><path d="M823.4,147.8 L823.9,159.9"/><path d="M823.9,159.9 C827.8,159.5 841.9,158.3 847.2,157.5 C852.6,156.7 854.5,155.4 856.0,155.0"/><path d="M758.8,141.9 L786.9,144.8"/><path d="M789.4,128.3 L789.4,134.6"/><path d="M788.9,146.3 L788.9,156.5"/><path d="M847.2,147.3 L875.4,134.2"/><path d="M880.8,134.6 L930.8,125.6"/><path d="M881.5,137.4 L951.7,125.6"/><path d="M793.0,183.0 C794.5,183.9 798.3,187.0 802.0,188.5 C805.7,190.0 811.0,191.1 815.0,191.8 C819.0,192.5 822.2,192.8 826.0,192.6 C829.8,192.4 834.5,191.6 837.8,190.7 C841.1,189.8 844.6,187.6 846.0,187.0"/><path d="M761.3,209.2 C764.9,215.1 775.1,213.8 778.7,219.7"/><path d="M765.0,234.2 C770.5,238.8 780.3,234.6 785.8,239.2"/><path d="M772.5,250.0 C778.3,257.5 791.7,258.4 797.5,265.8"/><path d="M780.0,270.8 C777.8,277.1 785.5,283.7 783.3,290.0"/><path d="M781.7,293.3 C781.8,299.1 790.7,300.9 790.8,306.7"/><path d="M770.0,306.7 C767.6,314.5 774.9,323.8 772.5,331.7"/><path d="M756.7,316.7 C752.0,323.0 756.3,333.7 751.7,340.0"/><path d="M740.8,323.3 C734.6,327.7 735.4,338.9 729.2,343.3"/><path d="M723.3,325.0 C715.9,326.7 712.5,337.4 705.0,339.2"/><path d="M700.0,319.2 C693.7,317.9 688.8,326.3 682.5,325.0"/><path d="M684.2,301.7 C678.2,300.1 673.4,308.2 667.5,306.7"/><path d="M719.2,236.7 C714.7,241.4 719.1,250.3 714.7,255.0"/><path d="M750.0,237.0 C743.0,238.7 740.4,249.1 733.3,250.8"/><path d="M768.3,247.5 C762.9,247.7 762.1,256.4 756.7,256.7"/><path d="M693.7,258.3 C695.5,264.0 704.8,263.5 706.7,269.2"/><path d="M718.3,285.0 C712.6,285.4 711.5,294.3 705.8,294.7"/><path d="M743.3,287.5 C737.0,290.8 737.2,301.4 730.8,304.7"/><path d="M763.3,282.5 C759.2,287.5 764.2,296.1 760.0,301.2"/><path d="M777.0,171.0 C778.2,175.4 782.8,179.6 784.0,184.0"/><path d="M766.0,187.0 C769.1,191.7 775.9,195.3 779.0,200.0"/><path d="M537.0,163.7 L537.0,271.5"/><path d="M630.8,246.7 L630.8,311.9"/></g>
<path d="M672,282 L676.5,285.5 L674.5,290 L671,287 Z" fill="#000" stroke="#000" stroke-width="1"/>
<rect x="396" y="254.4" width="646" height="1.7" fill="#ededed" style="mix-blend-mode:multiply"/>
</svg>
<span class="d" style="left:474.9px;top:318.7px;font-size:10.7px;letter-spacing:0.26px;color:#161616">1 (d)</span>
<span class="d" style="left:516.7px;top:318.7px;font-size:10.7px;letter-spacing:0.37px;color:#606060">vert</span>
<span class="d" style="left:618.9px;top:318.7px;font-size:10.7px;letter-spacing:0.26px;color:#606060">Alimentation feux de croisement et de route</span>
<span class="d" style="left:474.9px;top:337.3px;font-size:10.7px;letter-spacing:0.18px;color:#161616">2 (e)</span>
<span class="d" style="left:516.7px;top:337.3px;font-size:10.7px;letter-spacing:0.31px;color:#606060">marron</span>
<span class="d" style="left:618.9px;top:337.3px;font-size:10.7px;letter-spacing:0.13px;color:#606060">Appel de phares</span>
<span class="d" style="left:474.9px;top:355.8px;font-size:10.7px;letter-spacing:0.18px;color:#161616">3 (g)</span>
<span class="d" style="left:516.7px;top:355.8px;font-size:10.7px;letter-spacing:-0.13px;color:#606060">bleu</span>
<span class="d" style="left:618.9px;top:355.8px;font-size:10.7px;letter-spacing:0.17px;color:#606060">Feux de route</span>
<span class="d" style="left:474.9px;top:374.3px;font-size:10.7px;letter-spacing:0.31px;color:#161616">4 (s)</span>
<span class="d" style="left:516.7px;top:374.3px;font-size:10.7px;letter-spacing:0.37px;color:#606060">noir</span>
<span class="d" style="left:618.9px;top:374.3px;font-size:10.7px;letter-spacing:0.07px;color:#606060">Avertisseurs sonores</span>
<span class="d" style="left:474.9px;top:392.8px;font-size:10.7px;letter-spacing:0.34px;color:#161616">5 (f)</span>
<span class="d" style="left:516.7px;top:392.8px;font-size:10.7px;letter-spacing:0.16px;color:#606060">gris–noir</span>
<span class="d" style="left:618.9px;top:392.8px;font-size:10.7px;letter-spacing:0.08px;color:#606060">Feux de croisement</span>
<span class="d" style="left:474.9px;top:411.3px;font-size:10.7px;letter-spacing:0.26px;color:#161616">6 (b)</span>
<span class="d" style="left:516.7px;top:411.3px;font-size:10.7px;letter-spacing:0.10px;color:#606060">azur–noir</span>
<span class="d" style="left:618.9px;top:411.3px;font-size:10.7px;letter-spacing:-0.01px;color:#606060">Clignotant gauche</span>
<span class="d" style="left:474.9px;top:429.9px;font-size:10.7px;letter-spacing:0.31px;color:#161616">7 (c)</span>
<span class="d" style="left:516.7px;top:429.9px;font-size:10.7px;letter-spacing:-0.27px;color:#606060">azur</span>
<span class="d" style="left:618.9px;top:429.9px;font-size:10.7px;letter-spacing:0.24px;color:#606060">Clignotant droit</span>
<span class="d" style="left:474.9px;top:448.4px;font-size:10.7px;letter-spacing:0.26px;color:#161616">8 (n)</span>
<span class="d" style="left:516.7px;top:448.4px;font-size:10.7px;letter-spacing:0.31px;color:#606060">marron</span>
<span class="d" style="left:618.9px;top:448.4px;font-size:10.7px;letter-spacing:0.13px;color:#606060">Alimentation appel de phares</span>
<span class="d" style="left:474.9px;top:466.9px;font-size:10.7px;letter-spacing:0.08px;color:#161616">9 (a)</span>
<span class="d" style="left:516.7px;top:466.9px;font-size:10.7px;letter-spacing:0.09px;color:#606060">violet</span>
<span class="d" style="left:618.9px;top:466.9px;font-size:10.7px;letter-spacing:0.17px;color:#606060">Clignoteur des feux de direction</span>
<span class="d" style="left:474.9px;top:485.4px;font-size:10.7px;letter-spacing:0.54px;color:#161616">10 (t)</span>
<span class="d" style="left:516.7px;top:485.4px;font-size:10.7px;letter-spacing:0.37px;color:#606060">noir</span>
<span class="d" style="left:618.9px;top:485.4px;font-size:10.7px;letter-spacing:0.09px;color:#606060">Alimentation avertisseurs sonores</span>
<span class="d" style="left:474.9px;top:525.4px;font-size:10.7px;letter-spacing:0.28px;color:#161616">1 (l)</span>
<span class="d" style="left:516.7px;top:525.4px;font-size:10.7px;letter-spacing:-0.21px;color:#606060">jaune</span>
<span class="d" style="left:618.9px;top:525.4px;font-size:10.7px;letter-spacing:0.02px;color:#606060">Essuie–glace (intermittence)</span>
<span class="d" style="left:474.9px;top:544.0px;font-size:10.7px;letter-spacing:0.26px;color:#161616">2 (p)</span>
<span class="d" style="left:516.7px;top:544.0px;font-size:10.7px;letter-spacing:-0.10px;color:#606060">azur–blanc</span>
<span class="d" style="left:618.9px;top:544.0px;font-size:10.7px;letter-spacing:-0.11px;color:#606060">Essuie–glace (mise à zéro)</span>
<span class="d" style="left:474.9px;top:562.6px;font-size:10.7px;letter-spacing:0.39px;color:#161616">3 (m)</span>
<span class="d" style="left:516.7px;top:562.6px;font-size:10.7px;letter-spacing:-0.12px;color:#606060">azur–jaune</span>
<span class="d" style="left:618.9px;top:562.6px;font-size:10.7px;letter-spacing:-0.24px;color:#606060">Essuie–glace (vitesse basse)</span>
<span class="d" style="left:474.9px;top:581.2px;font-size:10.7px;letter-spacing:0.28px;color:#161616">4 (i)</span>
<span class="d" style="left:516.7px;top:581.2px;font-size:10.7px;letter-spacing:-0.26px;color:#606060">gris</span>
<span class="d" style="left:618.9px;top:581.2px;font-size:10.7px;letter-spacing:-0.16px;color:#606060">Essuie–glace (vitesse élevée)</span>
<span class="d" style="left:474.9px;top:599.8px;font-size:10.7px;letter-spacing:0.26px;color:#161616">5 (q)</span>
<span class="d" style="left:516.7px;top:599.8px;font-size:10.7px;letter-spacing:0.43px;color:#606060">vert–noir</span>
<span class="d" style="left:618.9px;top:599.8px;font-size:10.7px;letter-spacing:0.00px;color:#606060">Pompe électrique de lave–glace</span>
<span class="d" style="left:474.9px;top:618.4px;font-size:10.7px;letter-spacing:0.26px;color:#161616">6 (h)</span>
<span class="d" style="left:516.7px;top:618.4px;font-size:10.7px;letter-spacing:0.30px;color:#606060">rose–noir</span>
<span class="d" style="left:618.9px;top:618.4px;font-size:10.7px;letter-spacing:0.08px;color:#606060">Alimentation essuie–glace et pompe électrique de lave–glace</span>
<span class="d" style="left:463.5px;top:286.8px;font-size:11px;letter-spacing:-0.17px;color:#161616">Réf.</span>
<span class="d" style="left:525.8px;top:281.7px;font-size:11px;letter-spacing:0.34px;color:#161616">Couleur</span>
<span class="d" style="left:531.0px;top:293.9px;font-size:11px;letter-spacing:-0.30px;color:#161616">câbles</span>
<span class="d" style="left:774.0px;top:287.7px;font-size:11px;letter-spacing:0.10px;color:#161616">Fonction</span>
<span class="d" style="left:449.0px;top:263.1px;font-size:8px;letter-spacing:-0.34px;color:#666">VUE EN PERSPECTIVE</span>
<span class="d" style="left:984.4px;top:250.3px;font-size:5px;letter-spacing:-0.23px;color:#888">35</span>
<span class="d" style="left:467.0px;top:18.6px;font-size:12px;letter-spacing:-0.67px;color:#000;font-weight:bold">B</span>
<span class="d" style="left:620.0px;top:202.4px;font-size:12px;letter-spacing:1.83px;color:#000;font-weight:bold">K</span>
<span class="d" style="left:450.8px;top:386.1px;font-size:12px;letter-spacing:-0.17px;color:#000;font-weight:bold">B</span>
<span class="d" style="left:450.6px;top:563.1px;font-size:12px;letter-spacing:0.73px;color:#000;font-weight:bold">K</span>
<span class="d" style="left:688.3px;top:737.5px;font-size:18.6px;letter-spacing:0.11px;color:#000;font-weight:bold">76</span>

</div>
<div id="scroll" class="abs">
  <svg style="left:0;top:0" width="16" height="750" viewBox="0 0 16 750">
    <defs>
      <linearGradient id="tr" x1="0" y1="0" x2="1" y2="0"><stop offset="0" stop-color="#d9d0c2"/><stop offset="0.35" stop-color="#ece7e0"/><stop offset="1" stop-color="#fbfaf8"/></linearGradient>
      <linearGradient id="th" x1="0" y1="0" x2="1" y2="0"><stop offset="0" stop-color="#fdfcfb"/><stop offset="1" stop-color="#ebe5dc"/></linearGradient>
    </defs>
    <path d="M8.4 7 L10.9 11.6 L5.9 11.6 Z" fill="#8a867f" stroke="#4f4c46" stroke-width="0.8"/>
    <rect x="0.5" y="20" width="17" height="710" rx="7" fill="url(#tr)" stroke="#c2b6a3" stroke-width="1"/>
    <rect x="0.7" y="187.3" width="14.6" height="35.4" rx="6.5" fill="url(#th)" stroke="#a8987f" stroke-width="1"/>
    <g stroke="#b7ab99" stroke-width="1"><path d="M5 201.5 H11 M5 204.5 H11 M5 207.5 H11"/></g>
    <path d="M8.4 744.2 L10.9 739.6 L5.9 739.6 Z" fill="#8a867f" stroke="#4f4c46" stroke-width="0.8"/>
  </svg>
</div>
<div id="bottompanel" class="abs">
  <svg style="left:1px;top:2px" width="34" height="22" viewBox="0 0 34 22">
    <defs><radialGradient id="pu" cx="0.6" cy="0.5" r="0.7"><stop offset="0" stop-color="#c45fcc"/><stop offset="1" stop-color="#8d2f9d"/></radialGradient></defs>
    <rect x="0.4" y="1" width="21.6" height="19" rx="1.5" fill="url(#pu)"/>
    <rect x="0.8" y="1" width="20.8" height="3" fill="#eeeeda"/>
    <rect x="1.8" y="6.2" width="3.4" height="3.6" fill="#e6c9ea"/><rect x="1.8" y="11.6" width="3.4" height="3.6" fill="#e6c9ea"/>
    <g fill="#2b2a27"><rect x="26" y="7" width="4" height="1.2"/><rect x="26" y="10" width="4" height="1.2"/><rect x="26" y="13" width="4" height="1.2"/></g>
  </svg>
  <div class="abs" style="left:35px;top:1px;width:193px;height:24px;border-radius:4px 4px 0 0;background:linear-gradient(#3d3c38,#33322f)"></div>
  <svg style="left:39px;top:4px" width="18" height="16" viewBox="0 0 18 16">
    <defs><linearGradient id="fo" x1="0" y1="0" x2="0" y2="1"><stop offset="0" stop-color="#f4b58a"/><stop offset="1" stop-color="#e25a1c"/></linearGradient></defs>
    <path d="M0.5 1 L6 1 L7 2.4 L13.5 2.4 L13.5 14.4 L0.5 14.4 Z" fill="#f3f1ec" stroke="#c9c4ba" stroke-width="0.6"/>
    <rect x="2.6" y="4.4" width="13" height="10" fill="url(#fo)" stroke="#c24a15" stroke-width="0.6"/>
    <path d="M9 4.6 L9 13.4 L11 11.6 L12.4 14.6 L13.6 14 L12.2 11.2 L14.8 11 Z" fill="#e8e8e8" stroke="#6a6a6a" stroke-width="0.6"/>
  </svg>
  <span class="t" style="left:63.1px;letter-spacing:-0.09px">IVECO - Navigateur de...</span>
  <div class="abs" style="left:230px;top:1px;width:194px;height:24px;border-radius:4px 4px 0 0;background:linear-gradient(#87796a,#5e564b)"></div>
  <svg style="left:237px;top:5px" width="12" height="16" viewBox="0 0 12 16">
    <rect x="0.3" y="0.3" width="10.8" height="15.2" fill="#fff" stroke="#d8d4cc" stroke-width="0.6"/>
    <g fill="#c9c9c9"><rect x="4" y="2" width="4" height="0.7"/><rect x="3.4" y="5" width="2.4" height="0.7"/><rect x="3.4" y="7" width="2.4" height="0.7"/><rect x="3.4" y="9" width="2.4" height="0.7"/><rect x="3.4" y="11" width="2.4" height="0.7"/></g>
  </svg>
  <span class="t" style="left:259.1px;letter-spacing:-0.11px">Généralités</span>
  <!-- workspace switcher -->
  <div class="abs" style="left:1273px;top:2px;width:70px;height:21px;background:#fff"></div>
  <div class="abs" style="left:1274px;top:3px;width:33px;height:19px;background:#b9ab96"></div>
  <div class="abs" style="left:1309px;top:3px;width:33px;height:19px;background:#ddd5c8"></div>
  <div class="abs" style="left:1343px;top:1px;width:70px;height:21px;background:#2b2a27"></div>
  <div class="abs" style="left:1378px;top:2px;width:1px;height:19px;background:#44433e"></div>
  <svg style="left:1281px;top:4px" width="18" height="18" viewBox="0 0 18 18">
    <circle cx="9" cy="8.6" r="7.6" fill="#ee7a12"/>
    <circle cx="10" cy="7" r="4.6" fill="#2f8fd0"/>
    <path d="M2 3.4 C5 5 7 4 7.4 6.6 C6 9 8 11.4 11 10.6 C10 13 7 13 6 12 C8 15 13.6 14 14 9 C14.4 6 13.6 4 13 3 C16 5 17 8 16.6 10.6 C16 14.6 12.6 16.4 9 16.4 C4.6 16.4 1.2 13 1.2 8.6 C1.2 6.6 1.6 4.6 2 3.4 Z" fill="#e8600f"/>
  </svg>
  <div class="abs" style="left:1319px;top:4px;width:12px;height:16px;background:#fff;border:1px solid #cfcac1"></div>
  <!-- trash -->
  <svg style="left:1417px;top:0" width="22" height="24" viewBox="0 0 22 24">
    <defs><linearGradient id="trg" x1="0" y1="0" x2="1" y2="0"><stop offset="0" stop-color="#9a9a97"/><stop offset="0.5" stop-color="#e2e2e0"/><stop offset="1" stop-color="#9a9a97"/></linearGradient>
    <pattern id="mesh" width="2.4" height="2.4" patternUnits="userSpaceOnUse" patternTransform="rotate(45)"><rect width="2.4" height="2.4" fill="none"/><path d="M0 0 H2.4 M0 0 V2.4" stroke="#77777a" stroke-width="0.5"/></pattern></defs>
    <path d="M1.4 3.6 L19.4 3.6 L17.6 22.8 L3.4 22.8 Z" fill="url(#trg)"/>
    <path d="M1.4 3.6 L19.4 3.6 L17.6 22.8 L3.4 22.8 Z" fill="url(#mesh)" stroke="#6a6a67" stroke-width="0.7"/>
    <ellipse cx="10.4" cy="3.4" rx="9.2" ry="2" fill="#8a8a87" stroke="#b5b5b2" stroke-width="0.9"/>
    <path d="M4.6 9 L8 6.6 L11 8.6 L14 6.4 L16.4 9.4 L15.4 14 L16 19 L12 21.4 L8 19.6 L5 21 L4.4 15 Z" fill="#f4f4f2" opacity="0.8"/>
    <path d="M16.5 20 l4.5 0 l0 4 l-6 0 Z" fill="#e8e8e6" opacity="0.9"/>
  </svg>
</div>

</body>
</html>
